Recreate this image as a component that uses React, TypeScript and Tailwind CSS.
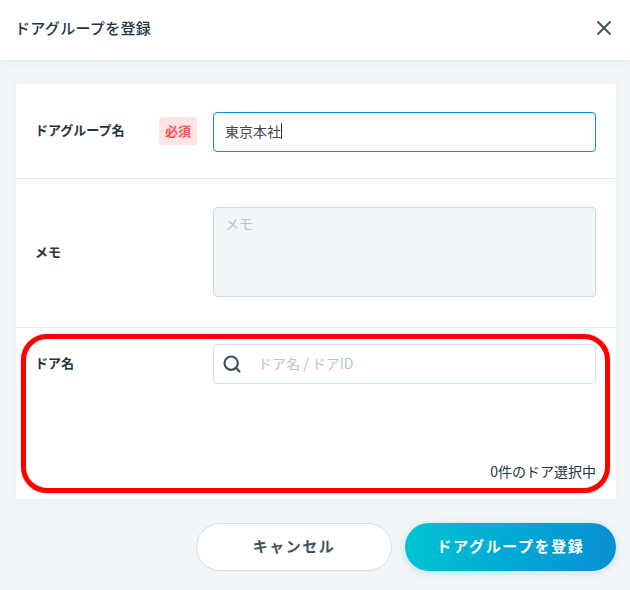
import { Search, X } from "lucide-react";

const FONT = "font-['Noto_Sans_CJK_JP','Noto_Sans',sans-serif]";

export default function App() {
  return (
    <div className={`h-[590px] w-[630px] overflow-hidden bg-[#f2f6f9] text-[#1e3542] ${FONT}`}>
      <header className="flex h-[60px] items-center justify-between bg-white pl-[15px] pr-[14px] shadow-[0_2px_6px_rgba(60,90,110,0.08)]">
        <h1 className="pb-[6px] text-[15px] font-medium leading-none tracking-[0.3px]">ドアグループを登録</h1>
        <X size={24} strokeWidth={2} className="mb-1 text-[#41535f]" />
      </header>

      <div className="relative ml-4 mt-6 w-[600px] bg-white shadow-[0_0_8px_rgba(60,90,110,0.06)]">
        <div className="flex h-[95px] items-center border-b border-[#e3ebf0] pl-[19px] pr-5">
          <span className="w-[124px] pb-[2px] text-[13px] font-bold">ドアグループ名</span>
          <span className="flex h-7 w-[38px] items-center justify-center rounded-[3px] bg-[#ffe4e6] pb-[1px] text-[13px] font-bold text-[#fa4f5a]">
            必須
          </span>
          <div className="ml-4 mt-[2px] flex h-10 w-[383px] items-center rounded border border-[#0a8ed4] pb-[2px] pl-[11px] text-[14px] text-[#3c4a52]">
            東京本社
            <span className="h-4 w-px bg-[#1e3542]" />
          </div>
        </div>

        <div className="flex h-[149px] items-center border-b border-[#e3ebf0] pl-[19px] pr-5">
          <span className="w-[178px] pb-[2px] text-[13px] font-bold">メモ</span>
          <div className="mb-[2px] h-[90px] w-[383px] rounded border border-[#c9dbe5] bg-[#f2f6f9] pl-[11px] pt-[5px] text-[14px] text-[#b5c6d0]">
            メモ
          </div>
        </div>

        <div className="relative h-[171px] pl-[19px] pr-5 pt-4">
          <div className="flex items-start">
            <span className="w-[178px] pt-[9px] text-[13px] font-bold">ドア名</span>
            <div className="flex h-10 w-[383px] items-center rounded border border-[#cfdfe8] pl-2 text-[14px] text-[#b5c6d0]">
              <Search size={20} strokeWidth={2.6} className="text-[#41535f]" />
              <span className="ml-4 pb-[2px]">ドア名 / ドアID</span>
            </div>
          </div>
          <p className="absolute bottom-[18px] right-5 text-[14px] leading-5">0件のドア選択中</p>
        </div>

        <div className="pointer-events-none absolute left-[5px] top-[250px] h-[159px] w-[589px] rounded-[26px] border-[5px] border-[#ff0000] shadow-[0_0_1px_#ff0000]" />
      </div>

      <div className="mt-6 flex justify-end gap-[13px] pr-[14px]">
        <button className="h-12 w-[196px] rounded-full border border-[#cfdfe8] bg-white pb-[2px] text-[15px] font-bold tracking-[1.5px] text-[#41535f]">
          キャンセル
        </button>
        <button className="h-12 w-[211px] rounded-full bg-gradient-to-r from-[#00c4d1] to-[#0a8ed4] pb-[2px] text-[15px] font-bold tracking-[1.6px] text-white shadow-[0_2px_8px_rgba(10,142,212,0.2)]">
          ドアグループを登録
        </button>
      </div>
    </div>
  );
}
